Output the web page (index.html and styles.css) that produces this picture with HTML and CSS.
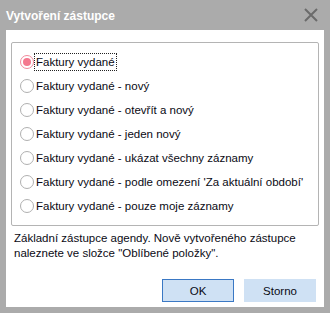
FILE: index.html
```html
<!DOCTYPE html>
<html lang="cs">
<head>
  <meta charset="UTF-8" />
  <title>Vytvoření zástupce</title>
  <link rel="stylesheet" href="styles.css">
</head>
<body>
  <div class="window">
    <div class="titlebar">
      <span class="title">Vytvoření zástupce</span>
      <svg class="close" width="16" height="16" viewBox="0 0 16 16">
        <path d="M2 2 L14 14 M14 2 L2 14" stroke="#6b6b6b" stroke-width="2" fill="none"/>
      </svg>
    </div>

    <div class="content">
      <div class="group">
        <label class="option"><span class="radio checked"></span><span class="text focus">Faktury vydané</span></label>
        <label class="option"><span class="radio"></span><span class="text">Faktury vydané - nový</span></label>
        <label class="option"><span class="radio"></span><span class="text">Faktury vydané - otevřít a nový</span></label>
        <label class="option"><span class="radio"></span><span class="text">Faktury vydané - jeden nový</span></label>
        <label class="option"><span class="radio"></span><span class="text">Faktury vydané - ukázat všechny záznamy</span></label>
        <label class="option"><span class="radio"></span><span class="text">Faktury vydané - podle omezení 'Za aktuální období'</span></label>
        <label class="option"><span class="radio"></span><span class="text">Faktury vydané - pouze moje záznamy</span></label>
      </div>

      <p class="note">
        Základní zástupce agendy. Nově vytvořeného zástupce<br>
        naleznete ve složce "Oblíbené položky".
      </p>

      <div class="buttons">
        <button class="btn default">OK</button>
        <button class="btn">Storno</button>
      </div>
    </div>
  </div>
</body>
</html>
```

FILE: styles.css
```css
* {
  box-sizing: border-box;
  margin: 0;
  padding: 0;
}
body {
  background: #ababab;
  font-family: 'Liberation Sans', Arial, sans-serif;
  font-size: 11.5px;
  color: #0a0a14;
}
.window {
  width: 330px;
  height: 313px;
  padding: 0 6px 6px 6px;
}
.titlebar {
  height: 30px;
  display: flex;
  align-items: center;
  justify-content: space-between;
}
.title {
  color: #fff;
  font-weight: bold;
  font-size: 12px;
  padding-top: 1px;
}
.close {
  margin-right: 5px;
  margin-top: -1px;
}
.content {
  background: #fff;
  height: 277px;
  padding: 12px 5px 0 5px;
  display: flex;
  flex-direction: column;
}
.group {
  height: 184px;
  border: 1px solid #b4b4b4;
  border-radius: 2px;
  padding: 12px 0 0 8px;
  display: flex;
  flex-direction: column;
  gap: 11px;
}
.option {
  display: flex;
  align-items: center;
  height: 13px;
}
.radio {
  width: 14px;
  height: 14px;
  border: 1px solid #b0b0b0;
  border-radius: 50%;
  background: #fff;
  margin-right: 1px;
  flex: none;
}
.radio.checked {
  border-color: #f28a9c;
  display: flex;
  align-items: center;
  justify-content: center;
}
.radio.checked::after {
  content: "";
  width: 8px;
  height: 8px;
  border-radius: 50%;
  background: #f4788e;
}
.text {
  white-space: nowrap;
  padding: 2px 1px;
}
.focus {
  outline: 1px dotted #222;
  outline-offset: 0;
}
.note {
  margin: 5px 0 0 3px;
  line-height: 15px;
}
.buttons {
  margin-top: auto;
  margin-bottom: 5px;
  display: flex;
  justify-content: flex-end;
  gap: 10px;
  padding-right: 3px;
}
.btn {
  width: 72px;
  height: 23px;
  font-family: 'Liberation Sans', Arial, sans-serif;
  font-size: 11.5px;
  color: #0a0a14;
  background: #cfe1f4;
  border: 1px solid #cfe1f4;
}
.btn.default {
  border-color: #3a78c4;
}
```
